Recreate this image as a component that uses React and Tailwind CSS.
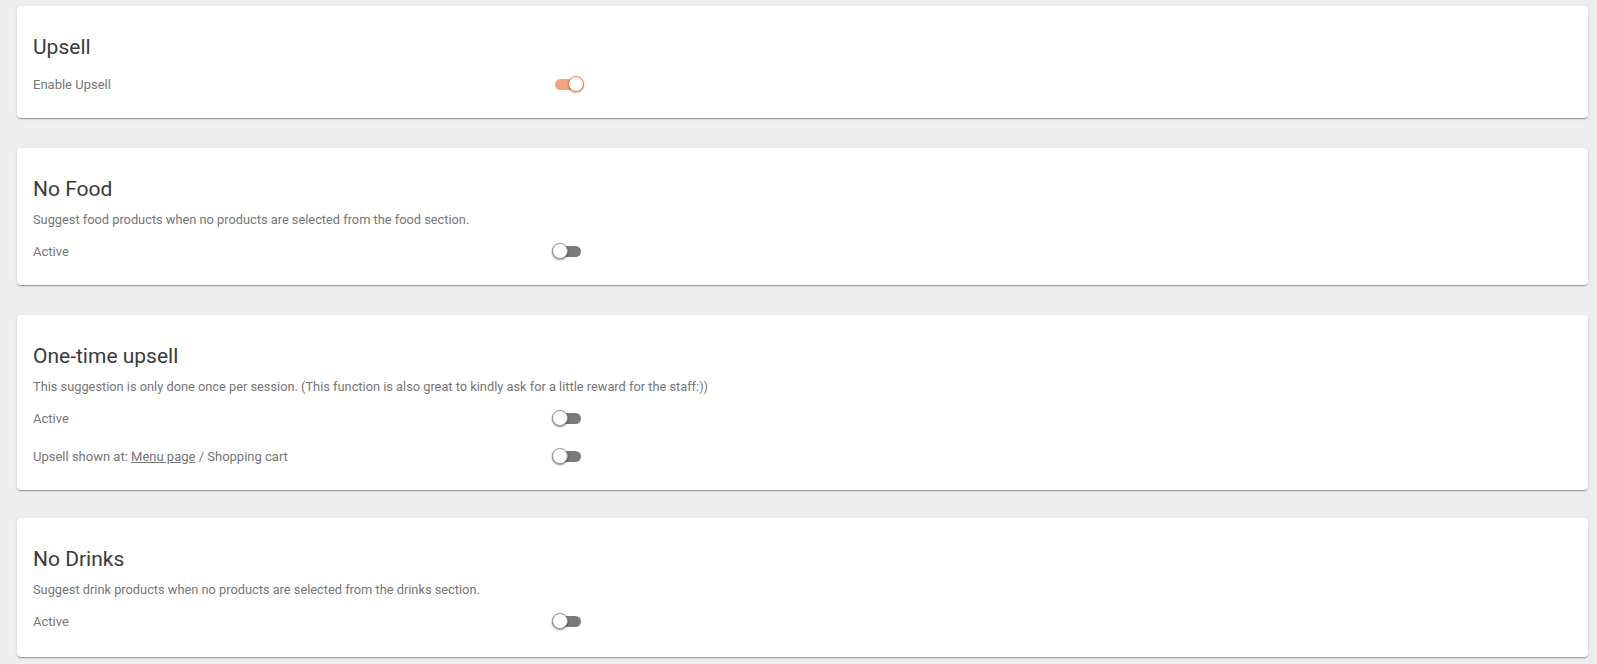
import React from "react";

function Toggle({ on, className = "" }) {
  return (
    <div className={`relative w-[29px] h-4 flex items-center ${className}`}>
      <div
        className={`w-[29px] h-[11px] rounded-full ${
          on ? "bg-[#f5a37e]" : "bg-[#7a7a7a]"
        }`}
      />
      <div
        className={`absolute top-0 w-4 h-4 rounded-full bg-white ${
          on
            ? "left-[13px] border-[1.5px] border-[#ef7d4b] shadow-[0_1px_2px_rgba(0,0,0,0.3)]"
            : "left-0 border border-[#9a9a9a] shadow-[0_1px_2px_rgba(0,0,0,0.45)]"
        }`}
      />
    </div>
  );
}

function Row({ label, on, shift }) {
  return (
    <div className="flex items-center h-[38px]">
      <div className={shift ? "w-[522px]" : "w-[519px]"}>
        <span className="text-[13px] leading-4 text-[#767676]">{label}</span>
      </div>
      <Toggle on={on} />
    </div>
  );
}

function Card({ title, description, last, children }) {
  return (
    <div
      className={`bg-white rounded-[4px] shadow-[0_2px_1px_-1px_rgba(0,0,0,0.2),0_1px_1px_0_rgba(0,0,0,0.14),0_1px_3px_0_rgba(0,0,0,0.12)] pt-[29px] px-[16px] ${
        last ? "pb-[17px] -mt-[2px]" : "pb-[15px]"
      }`}
    >
      <h3 className="text-[21px] leading-6 text-[#3a3a3a] font-normal">{title}</h3>
      {description ? (
        <p className="mt-[11px] text-[12.8px] leading-4 text-[#767676]">{description}</p>
      ) : null}
      <div className={description ? "mt-1" : "mt-[6px]"}>{children}</div>
    </div>
  );
}

export default function App() {
  return (
    <div
      className="min-h-[664px] bg-[#eeeeee] pl-[17px] pr-[9px] pt-[6px] pb-4 flex flex-col gap-[30px]"
      style={{ fontFamily: "Roboto, 'Liberation Sans', sans-serif" }}
    >
      <Card title="Upsell">
        <Row label="Enable Upsell" on shift />
      </Card>

      <Card
        title="No Food"
        description="Suggest food products when no products are selected from the food section."
      >
        <Row label="Active" />
      </Card>

      <Card
        title="One-time upsell"
        description="This suggestion is only done once per session. (This function is also great to kindly ask for a little reward for the staff:))"
      >
        <Row label="Active" />
        <Row
          label={
            <>
              Upsell shown at: <span className="underline">Menu page</span> / Shopping cart
            </>
          }
        />
      </Card>

      <Card
        title="No Drinks"
        description="Suggest drink products when no products are selected from the drinks section."
        last
      >
        <Row label="Active" />
      </Card>
    </div>
  );
}
